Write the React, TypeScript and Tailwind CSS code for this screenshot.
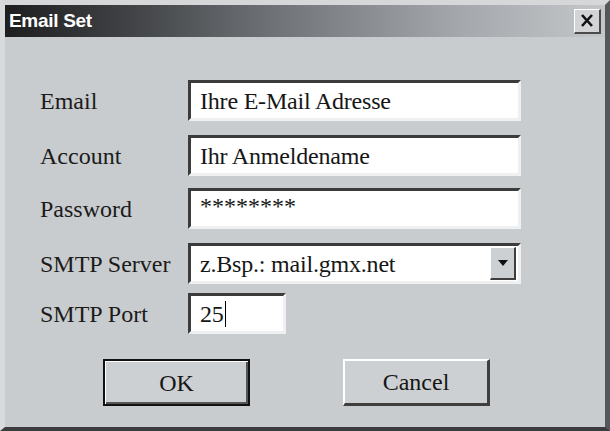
const rows = [
  { label: "Email", value: "Ihre E-Mail Adresse", mt: "mt-0" },
  { label: "Account", value: "Ihr Anmeldename", mt: "mt-[14px]" },
  { label: "Password", value: "********", mt: "mt-[12px]" },
];

function Label({ text }: { text: string }) {
  return <div className="w-[148px] text-[24px] leading-none text-[#1b1b1b] font-['Liberation_Serif',serif]">{text}</div>;
}

function Sunken({ children, className = "" }: { children?: React.ReactNode; className?: string }) {
  return (
    <div
      className={`h-[41px] bg-white border-t-[3px] border-l-[3px] border-b-[3px] border-r-[3px] border-t-[#3b3b3b] border-l-[#3b3b3b] border-b-[#eef0f1] border-r-[#eef0f1] flex items-center pl-[9px] text-[24px] leading-none text-[#161616] tracking-[-0.2px] font-['Liberation_Serif',serif] ${className}`}
    >
      {children}
    </div>
  );
}

export default function App() {
  return (
    <div className="w-[610px] h-[431px] bg-[#c9ccce] flex flex-col border-t-[5px] border-t-[#d5d7d9] border-l-[5px] border-l-[#d8dadb] border-r-[5px] border-r-[#555759] border-b-[4px] border-b-[#3a3c3e]">
      {/* title bar */}
      <div className="h-[32px] shrink-0 flex items-center justify-between pl-[4px] pr-[4px] bg-[linear-gradient(90deg,#1e1e1f_0%,#3f4144_20%,#6f7377_45%,#a3a6aa_75%,#c4c7ca_100%)]">
        <span className="text-white font-bold text-[19px] font-['Liberation_Sans',sans-serif] tracking-[-0.3px]">Email Set</span>
        <div className="w-[27px] h-[25px] bg-[#d2d4d6] border-t border-l border-t-white border-l-white border-b-2 border-r-2 border-b-[#4a4a4a] border-r-[#4a4a4a] flex items-center justify-center">
          <svg width="14" height="13" viewBox="0 0 14 13">
            <path d="M2 1 L12 12 M12 1 L2 12" stroke="#111" strokeWidth="2.6" />
          </svg>
        </div>
      </div>

      {/* form */}
      <div className="flex flex-col pl-[35px] pt-[43px]">
        {rows.map((r) => (
          <div key={r.label} className={`flex items-center ${r.mt}`}>
            <Label text={r.label} />
            <Sunken className="w-[333px]">
              <span className={r.label === "Password" ? "tracking-[0px] -mt-[6px]" : ""}>{r.value}</span>
            </Sunken>
          </div>
        ))}

        <div className="flex items-center mt-[14px]">
          <Label text="SMTP Server" />
          <Sunken className="w-[333px] pr-[2px] justify-between">
            <span>z.Bsp.: mail.gmx.net</span>
            <div className="w-[26px] h-[33px] bg-[#cdd0d2] border-t border-l border-t-white border-l-white border-b-2 border-r-2 border-b-[#3e3e3e] border-r-[#3e3e3e] flex items-center justify-center">
              <svg width="12" height="8" viewBox="0 0 12 8">
                <path d="M1 1 L11 1 L6 7 Z" fill="#111" />
              </svg>
            </div>
          </Sunken>
        </div>

        <div className="flex items-center mt-[9px]">
          <Label text="SMTP Port" />
          <Sunken className="w-[98px]">
            <span>25</span>
            <span className="w-[1px] h-[26px] bg-black ml-[1px]" />
          </Sunken>
        </div>

        {/* buttons */}
        <div className="flex mt-[25px] pl-[63px] gap-[93px]">
          <button className="w-[147px] h-[47px] bg-[#cdd0d2] border-2 border-[#111] shadow-[inset_1px_1px_0_#fff,inset_-2px_-2px_0_#555] text-[24px] text-[#161616] font-['Liberation_Serif',serif]">
            OK
          </button>
          <button className="w-[147px] h-[47px] bg-[#cdd0d2] border-t-2 border-l-2 border-t-white border-l-white border-b-[3px] border-r-[3px] border-b-[#3e3e3e] border-r-[#3e3e3e] text-[24px] text-[#161616] font-['Liberation_Serif',serif]">
            Cancel
          </button>
        </div>
      </div>
    </div>
  );
}
